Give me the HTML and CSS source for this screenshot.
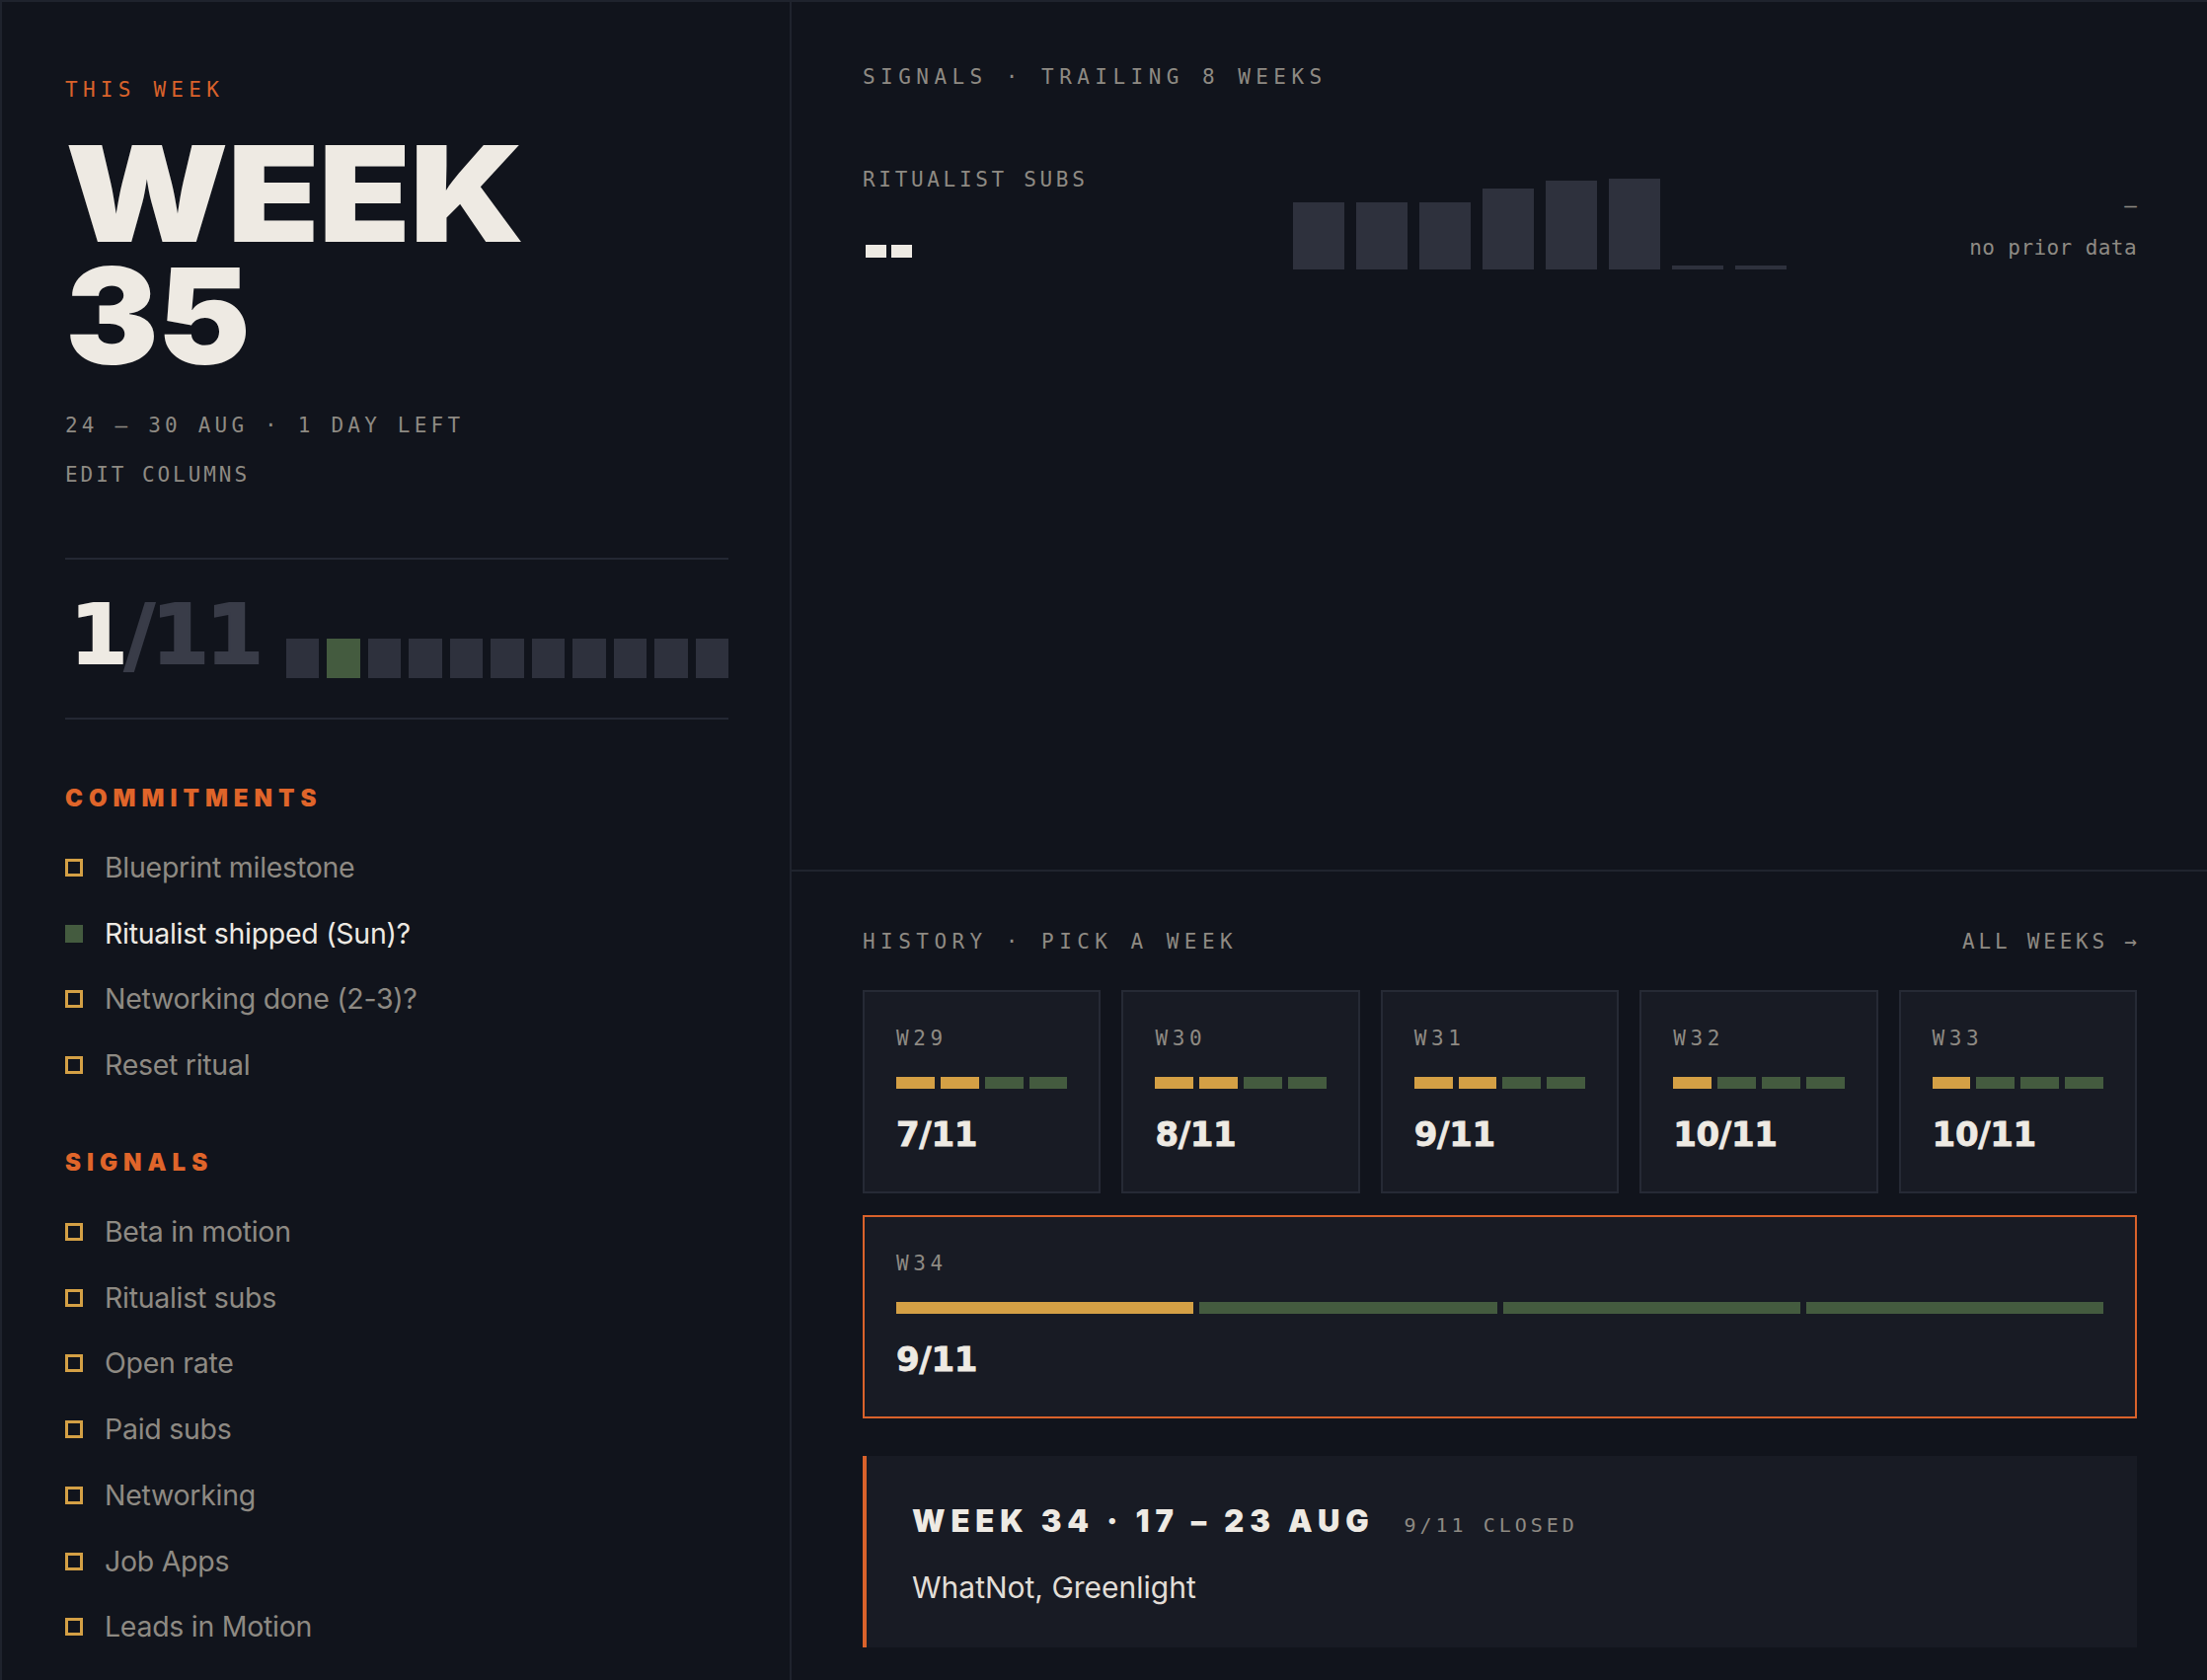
FILE: index.html
```html
<!DOCTYPE html>
<html lang="en">
<head>
<meta charset="utf-8">
<title>Week 35</title>
<link rel="stylesheet" href="styles.css">
</head>
<body>
<div class="app">
  <aside class="left">
    <div class="eyebrow">THIS WEEK</div>
    <h1 class="week-title"><span class="wt-line wt-word">WEEK</span><span class="wt-line wt-num">35</span></h1>
    <div class="meta">24 – 30 AUG · 1 DAY LEFT</div>
    <div class="meta-link">EDIT COLUMNS</div>

    <div class="score-row">
      <div class="score"><span class="done">1</span><span class="total">/11</span></div>
      <div class="pips">
        <span class="pip"></span><span class="pip on"></span><span class="pip"></span><span class="pip"></span><span class="pip"></span><span class="pip"></span><span class="pip"></span><span class="pip"></span><span class="pip"></span><span class="pip"></span><span class="pip"></span>
      </div>
    </div>

    <section class="group">
      <h2 class="group-title">COMMITMENTS</h2>
      <ul class="items">
        <li class="item"><span class="box"></span>Blueprint milestone</li>
        <li class="item done"><span class="box"></span>Ritualist shipped (Sun)?</li>
        <li class="item"><span class="box"></span>Networking done (2-3)?</li>
        <li class="item"><span class="box"></span>Reset ritual</li>
      </ul>
    </section>

    <section class="group">
      <h2 class="group-title">SIGNALS</h2>
      <ul class="items">
        <li class="item"><span class="box"></span>Beta in motion</li>
        <li class="item"><span class="box"></span>Ritualist subs</li>
        <li class="item"><span class="box"></span>Open rate</li>
        <li class="item"><span class="box"></span>Paid subs</li>
        <li class="item"><span class="box"></span>Networking</li>
        <li class="item"><span class="box"></span>Job Apps</li>
        <li class="item"><span class="box"></span>Leads in Motion</li>
      </ul>
    </section>
  </aside>

  <main class="right">
    <section class="signals">
      <div class="section-label">SIGNALS · TRAILING 8 WEEKS</div>
      <div class="signal-row">
        <div class="signal-name">
          <div class="signal-label">RITUALIST SUBS</div>
          <div class="signal-value" aria-label="--"><span class="dash"></span><span class="dash"></span></div>
        </div>
        <div class="bars">
          <span class="bar" style="height:68px"></span>
          <span class="bar" style="height:68px"></span>
          <span class="bar" style="height:68px"></span>
          <span class="bar" style="height:82px"></span>
          <span class="bar" style="height:90px"></span>
          <span class="bar" style="height:92px"></span>
          <span class="bar" style="height:4px"></span>
          <span class="bar" style="height:4px"></span>
        </div>
        <div class="signal-delta">
          <div class="delta-mark">–</div>
          <div class="delta-note">no prior data</div>
        </div>
      </div>
    </section>

    <section class="history">
      <div class="history-head">
        <div class="section-label">HISTORY · PICK A WEEK</div>
        <div class="section-label link">ALL WEEKS →</div>
      </div>

      <div class="week-grid">
        <div class="week-card">
          <div class="wk">W29</div>
          <div class="segs"><span class="seg amber"></span><span class="seg amber"></span><span class="seg green"></span><span class="seg green"></span></div>
          <div class="wk-score">7/11</div>
        </div>
        <div class="week-card">
          <div class="wk">W30</div>
          <div class="segs"><span class="seg amber"></span><span class="seg amber"></span><span class="seg green"></span><span class="seg green"></span></div>
          <div class="wk-score">8/11</div>
        </div>
        <div class="week-card">
          <div class="wk">W31</div>
          <div class="segs"><span class="seg amber"></span><span class="seg amber"></span><span class="seg green"></span><span class="seg green"></span></div>
          <div class="wk-score">9/11</div>
        </div>
        <div class="week-card">
          <div class="wk">W32</div>
          <div class="segs"><span class="seg amber"></span><span class="seg green"></span><span class="seg green"></span><span class="seg green"></span></div>
          <div class="wk-score">10/11</div>
        </div>
        <div class="week-card">
          <div class="wk">W33</div>
          <div class="segs"><span class="seg amber"></span><span class="seg green"></span><span class="seg green"></span><span class="seg green"></span></div>
          <div class="wk-score">10/11</div>
        </div>
      </div>

      <div class="week-card selected">
        <div class="wk">W34</div>
        <div class="segs"><span class="seg amber"></span><span class="seg green"></span><span class="seg green"></span><span class="seg green"></span></div>
        <div class="wk-score">9/11</div>
      </div>

      <div class="detail">
        <div class="detail-head">
          <span class="detail-title">WEEK 34 · 17 – 23 AUG</span>
          <span class="detail-status">9/11 CLOSED</span>
        </div>
        <div class="detail-body">WhatNot, Greenlight</div>
      </div>
    </section>
  </main>
</div>
</body>
</html>
```

FILE: styles.css
```css
* { box-sizing: border-box; }

html, body {
  margin: 0;
  padding: 0;
  background: #11141c;
}

body {
  font-family: "Inter", "Liberation Sans", sans-serif;
  color: #eeeae3;
  height: 1702px;
  overflow: hidden;
}

.app {
  display: grid;
  grid-template-columns: 800px 1fr;
  min-height: 1702px;
  border-top: 2px solid #1f232d;
  border-left: 2px solid #1f232d;
}

/* ---------- left column ---------- */
.left {
  border-right: 2px solid #1f232d;
  padding: 76px 62px 0 64px;
}

.eyebrow {
  font-family: "DejaVu Sans Mono", monospace;
  font-size: 21px;
  line-height: 26px;
  letter-spacing: 0.25em;
  color: #d9622b;
}

.week-title {
  margin: 30px 0 0;
  font-family: "Inter", sans-serif;
  font-weight: 900;
  font-size: 135px;
  line-height: 124px;
  letter-spacing: -0.01em;
  color: #eeeae3;
}

.wt-line {
  display: block;
  width: max-content;
  height: 124px;
  transform-origin: left center;
}

.wt-word { transform: scaleX(1.135); }
.wt-num { transform: scaleX(1.05); }

.meta {
  margin-top: 36px;
  font-family: "DejaVu Sans Mono", monospace;
  font-size: 21px;
  line-height: 26px;
  letter-spacing: 0.2em;
  color: #8e8a83;
}

.meta-link {
  margin-top: 24px;
  font-family: "DejaVu Sans Mono", monospace;
  font-size: 21px;
  line-height: 26px;
  letter-spacing: 0.14em;
  color: #8e8a83;
}

.score-row {
  margin-top: 71px;
  display: flex;
  align-items: flex-end;
  gap: 26px;
  padding: 32px 0 40px;
  border-top: 2px solid #242833;
  border-bottom: 2px solid #242833;
}

.score {
  font-family: "DejaVu Sans", sans-serif;
  font-weight: 700;
  font-size: 84px;
  line-height: 88px;
  letter-spacing: -0.04em;
  -webkit-text-stroke: 2px currentColor;
  white-space: nowrap;
  padding-left: 5px;
}

.score .done { color: #eeeae3; }
.score .total { color: #393c48; }

.pips {
  flex: 1;
  display: grid;
  grid-template-columns: repeat(11, 1fr);
  gap: 8px;
}

.pip {
  height: 40px;
  background: #2e313d;
}

.pip.on { background: #445b3f; }

.group { margin-top: 65px; }

.group-title {
  margin: 0;
  font-family: "Inter", sans-serif;
  font-weight: 900;
  font-size: 24px;
  line-height: 30px;
  letter-spacing: 0.25em;
  color: #e0652a;
}

.items {
  list-style: none;
  margin: 36px 0 0;
  padding: 0;
  display: flex;
  flex-direction: column;
  gap: 28.7px;
}

.item {
  display: flex;
  align-items: center;
  gap: 22px;
  font-size: 28.5px;
  line-height: 38px;
  color: #8e8a83;
  letter-spacing: -0.01em;
}

.box {
  flex: none;
  width: 18px;
  height: 18px;
  border: 3px solid #d4a045;
}

.item.done { color: #eeeae3; }
.item.done .box { background: #445b3f; border-color: #445b3f; }

/* ---------- right column ---------- */
.section-label {
  font-family: "DejaVu Sans Mono", monospace;
  font-size: 21px;
  line-height: 26px;
  letter-spacing: 0.26em;
  color: #8e8a83;
  white-space: nowrap;
}

.section-label.link { letter-spacing: 0.18em; margin-right: -0.18em; }

.signals {
  padding: 63px 71px 0 72px;
  height: 881px;
  border-bottom: 2px solid #20242e;
}

.signal-row {
  margin-top: 78px;
  display: grid;
  grid-template-columns: 436px 500px 1fr;
  align-items: end;
}

.signal-label {
  font-family: "DejaVu Sans Mono", monospace;
  font-size: 21px;
  line-height: 26px;
  letter-spacing: 0.175em;
  color: #8e8a83;
}

.signal-value {
  display: flex;
  gap: 5px;
  margin: 53px 0 12px 3px;
}

.dash {
  width: 21px;
  height: 13px;
  background: #eeeae3;
}

.bars {
  display: flex;
  align-items: flex-end;
  gap: 12px;
}

.bar {
  width: 52px;
  background: #2e313d;
}

.signal-delta {
  display: flex;
  flex-direction: column;
  align-items: flex-end;
  font-family: "DejaVu Sans Mono", monospace;
  color: #8e8a83;
  padding-bottom: 9px;
}

.delta-mark {
  font-size: 21px;
  line-height: 26px;
}

.delta-note {
  margin-top: 17px;
  font-size: 21px;
  line-height: 26px;
  letter-spacing: 0.02em;
}

.history {
  padding: 58px 71px 0 72px;
}

.history-head {
  display: flex;
  justify-content: space-between;
}

.week-grid {
  margin-top: 36px;
  display: grid;
  grid-template-columns: repeat(5, 1fr);
  gap: 21px;
}

.week-card {
  background: #181b24;
  border: 2px solid #262a35;
  padding: 34px 32px 36px;
}

.week-card.selected {
  margin-top: 22px;
  border-color: #d9622b;
}

.wk {
  font-family: "DejaVu Sans Mono", monospace;
  font-size: 21px;
  line-height: 26px;
  letter-spacing: 0.22em;
  color: #8e8a83;
}

.segs {
  margin-top: 26px;
  display: flex;
  gap: 6px;
}

.seg {
  flex: 1;
  height: 12px;
}

.seg.amber { background: #d4a045; }
.seg.green { background: #445b3f; }

.wk-score {
  margin-top: 24px;
  font-family: "DejaVu Sans", sans-serif;
  font-weight: 700;
  font-size: 34px;
  line-height: 44px;
  letter-spacing: -0.01em;
  -webkit-text-stroke: 0.8px currentColor;
  color: #eeeae3;
}

.detail {
  margin-top: 38px;
  background: #181b24;
  border-left: 4px solid #d9622b;
  padding: 48px 40px 42px 46px;
}

.detail-head {
  display: flex;
  align-items: baseline;
  gap: 30px;
}

.detail-title {
  font-family: "Inter", sans-serif;
  font-weight: 900;
  font-size: 31px;
  line-height: 36px;
  letter-spacing: 0.19em;
  color: #eeeae3;
}

.detail-status {
  font-family: "DejaVu Sans Mono", monospace;
  font-size: 20px;
  letter-spacing: 0.2em;
  color: #8e8a83;
}

.detail-body {
  margin-top: 30px;
  font-size: 30px;
  line-height: 38px;
  color: #e2ded7;
}
```
